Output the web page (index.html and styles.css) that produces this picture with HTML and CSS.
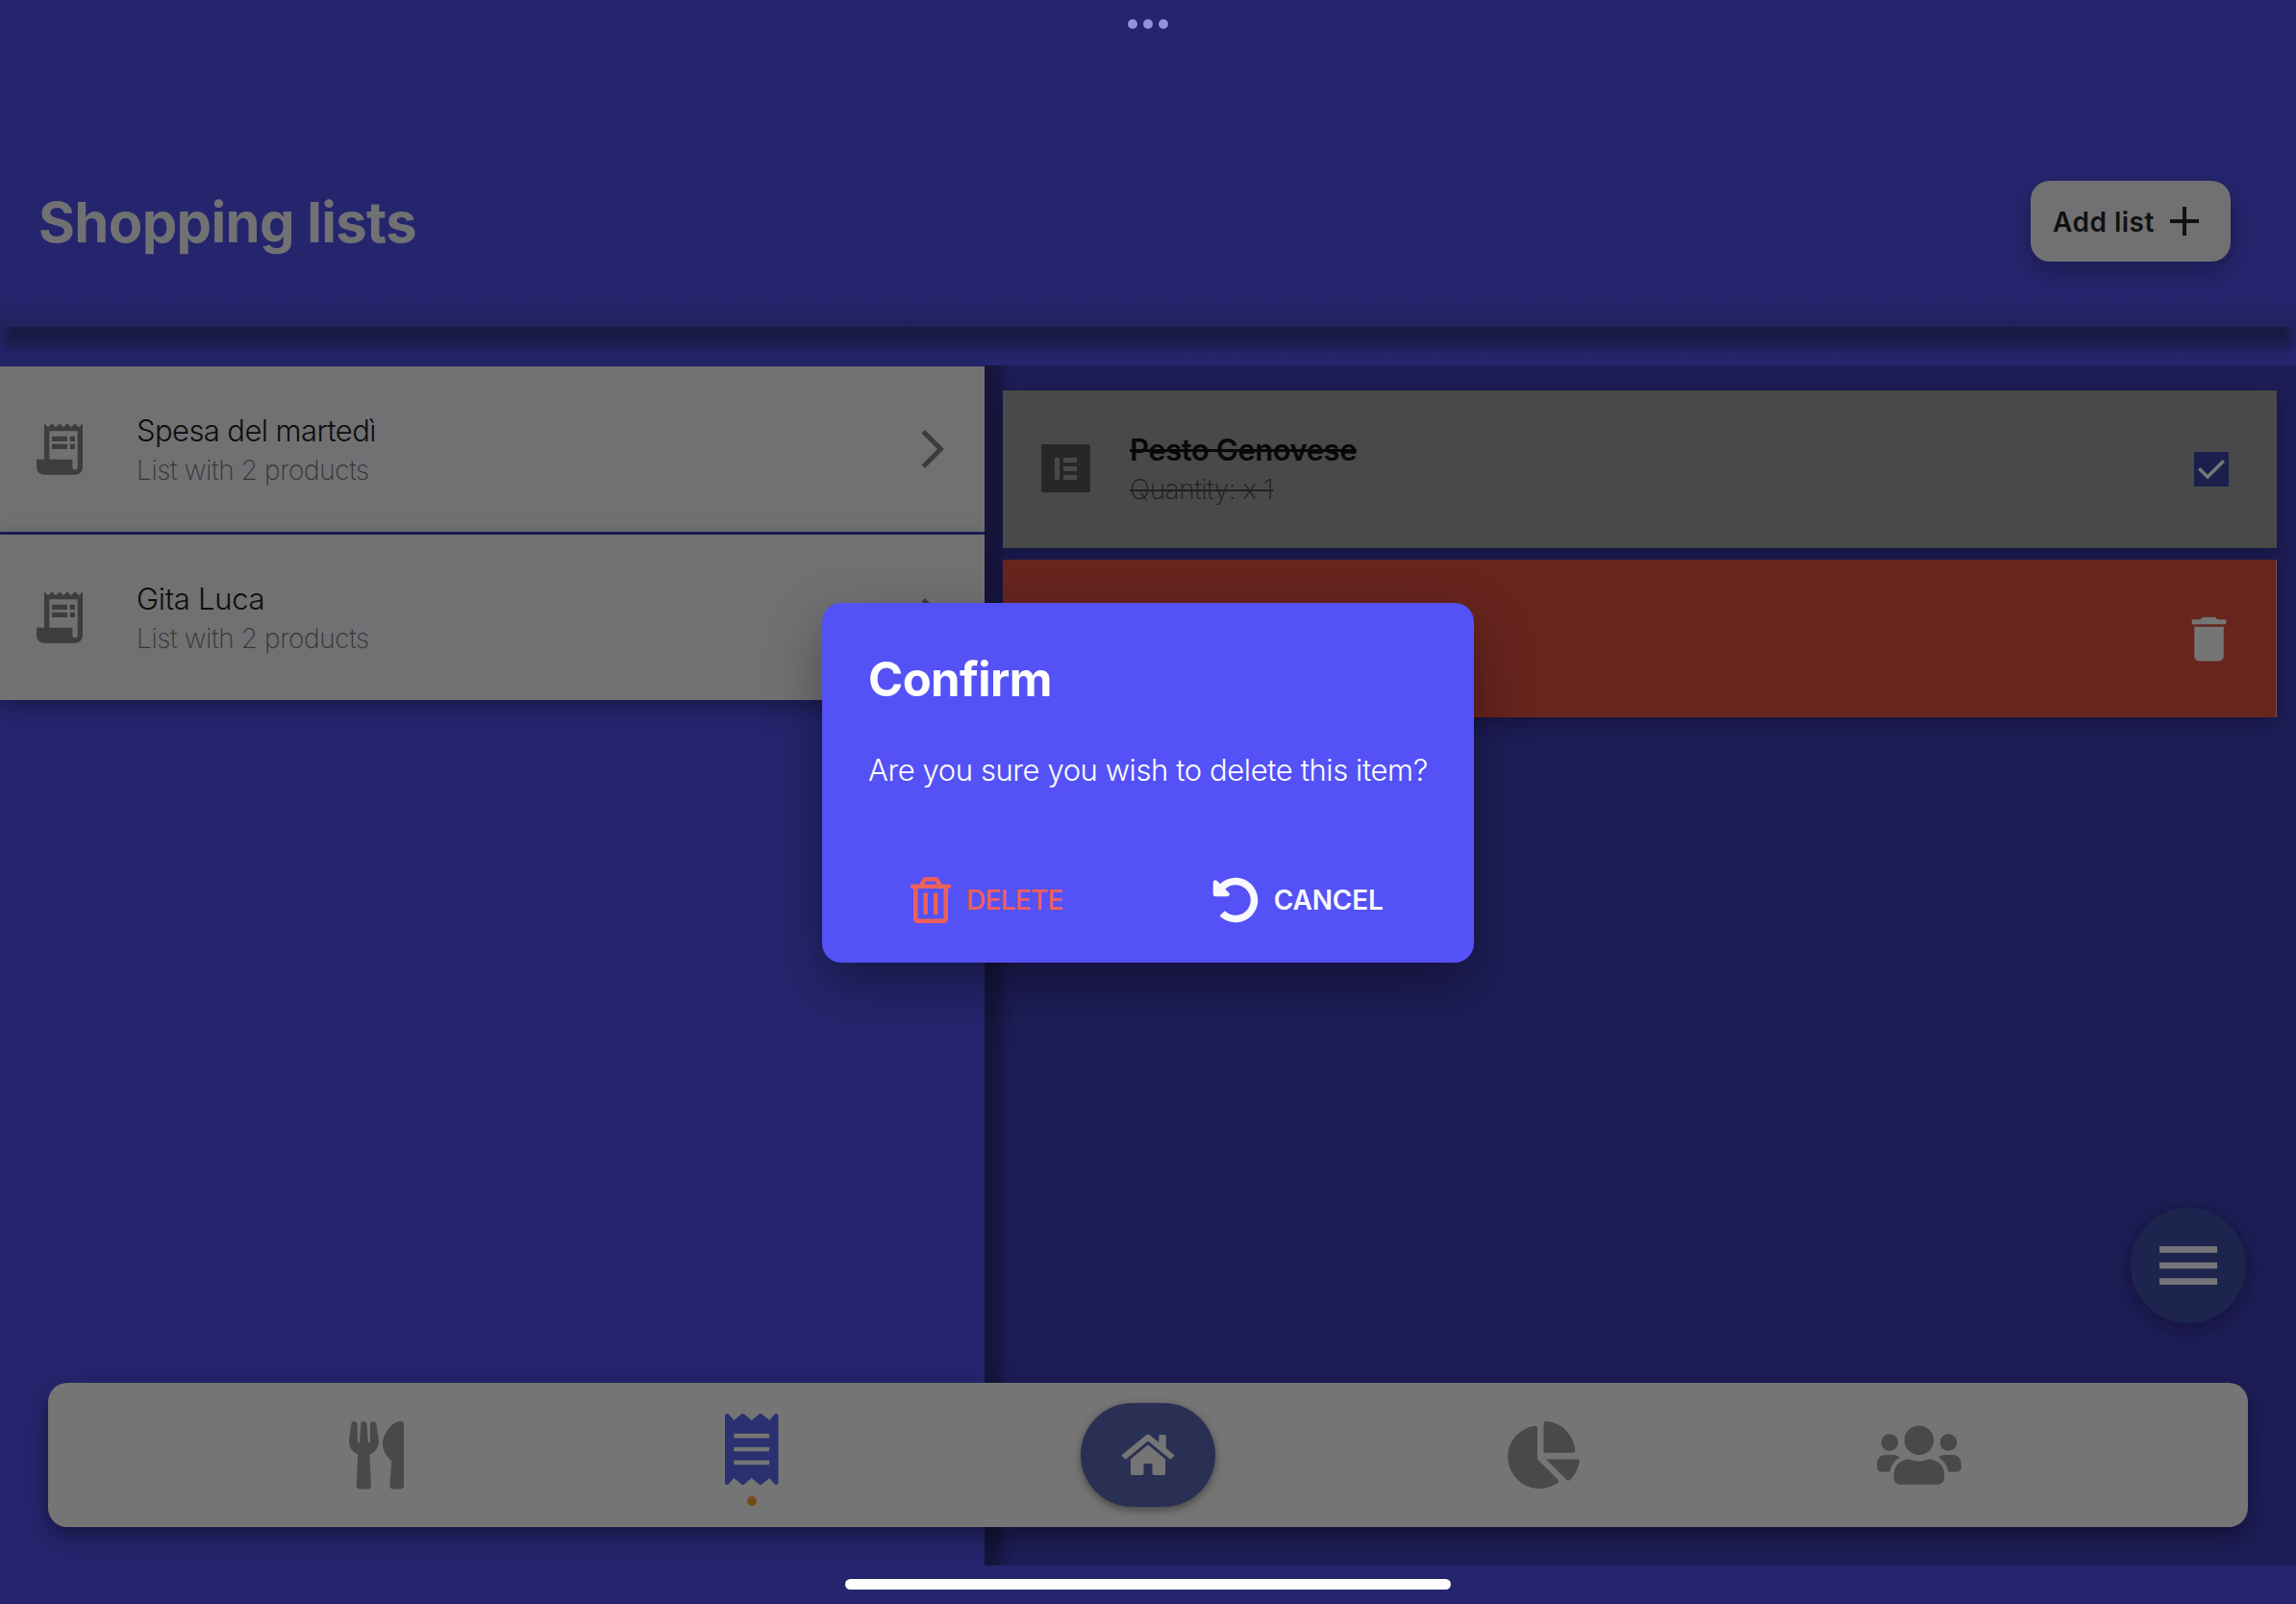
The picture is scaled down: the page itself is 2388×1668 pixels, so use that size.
FILE: index.html
```html
<!DOCTYPE html>
<html lang="en">
<head>
<meta charset="utf-8">
<title>Shopping lists</title>
<link rel="stylesheet" href="styles.css">
</head>
<body>
<svg class="sprite" aria-hidden="true">
  <symbol id="receipt-long" viewBox="0 0 24 24"><path fill-rule="evenodd" d="M19.5 3.5L18 2l-1.5 1.5L15 2l-1.5 1.5L12 2l-1.5 1.5L9 2 7.5 3.5 6 2v14H3v3c0 1.66 1.34 3 3 3h12c1.66 0 3-1.34 3-3V2l-1.5 1.5zM19 19c0 .55-.45 1-1 1s-1-.45-1-1v-3H8V5h11v14z"/><path d="M9 7h6v2H9zM16 7h2v2h-2zM9 10h6v2H9zM16 10h2v2h-2z"/></symbol>
  <symbol id="chevron" viewBox="0 0 24 24"><path d="M6.23 20.23 8 22l10-10L8 2 6.23 3.77 14.46 12z"/></symbol>
</svg>
<div class="app">
  <div class="grabber"><i></i><i></i><i></i></div>
  <header class="header">
    <h1 class="title">Shopping lists</h1>
    <button class="add"><span class="add-label">Add list</span><svg class="plus" viewBox="0 0 30 30"><path d="M13 0h4v13h13v4H17v13h-4V17H0v-4h13z"/></svg></button>
  </header>
  <div class="divider"></div>
  <main class="panels">
    <section class="lists">
      <article class="list-row">
        <svg class="receipt-icon"><use href="#receipt-long"/></svg>
        <div class="row-text"><div class="row-title">Spesa del martedì</div><div class="row-sub">List with 2 products</div></div>
        <svg class="chevron"><use href="#chevron"/></svg>
      </article>
      <article class="list-row">
        <svg class="receipt-icon"><use href="#receipt-long"/></svg>
        <div class="row-text"><div class="row-title short">Gita Luca</div><div class="row-sub">List with 2 products</div></div>
        <svg class="chevron"><use href="#chevron"/></svg>
      </article>
    </section>
    <section class="products">
      <article class="product">
        <svg class="product-icon" viewBox="0 0 51 50"><rect class="tile" width="51" height="50" rx="2"/><path class="marks" d="M14 14h5v23h-5zM23 14h14v5H23zM23 23h14v5H23zM23 32h14v5H23z"/></svg>
        <div class="product-text"><div class="product-title">Pesto Genovese</div><div class="product-sub">Quantity: x 1</div></div>
        <svg class="check" viewBox="0 0 36 36"><rect class="box" width="36" height="36" rx="1.5"/><path class="tick" d="M5.2 17.2 14 26 30.8 9.2"/></svg>
      </article>
      <article class="product removing">
        <svg class="bin" viewBox="0 0 24 24"><path d="M6 19c0 1.1.9 2 2 2h8c1.1 0 2-.9 2-2V7H6v12zM19 4h-3.5l-1-1h-5l-1 1H5v2h14V4z"/></svg>
      </article>
    </section>
  </main>
  <button class="fab"><svg viewBox="0 0 24 24"><path d="M3 18h18v-2H3v2zm0-5h18v-2H3v2zm0-7v2h18V6H3z"/></svg></button>
  <nav class="nav">
    <a class="tab"><svg class="utensils" viewBox="1089 236 171 211"><path d="M1096 244q1-8 9-8t10 8L1116 302h6L1126 244q1-8 9-8t10 8L1148 302h7L1155 244q1-8 9-8t10 8L1182 296Q1182 328 1153 340L1158 436q0 11-10 11h-26q-10 0-10-11L1117 340Q1089 328 1089 296z"/><path d="M1260 244v193q0 10-10 10h-24q-10 0-10-10L1222 360Q1194 336 1194 307C1194 280 1218 238 1250 236q10 0 10 8z"/></svg></a>
    <a class="tab active"><svg class="receipt" viewBox="0 0 384 512"><path d="M358.4 3.2L320 48 265.6 3.2a15.9 15.9 0 0 0-19.2 0L192 48 137.6 3.2a15.9 15.9 0 0 0-19.2 0L64 48 25.6 3.2C15-4.7 0 2.8 0 16v480c0 13.2 15 20.7 25.6 12.8L64 464l54.4 44.8a15.9 15.9 0 0 0 19.2 0L192 464l54.4 44.8a15.9 15.9 0 0 0 19.2 0L320 464l38.4 44.8c10.5 7.9 25.6.4 25.6-12.8V16c0-13.2-15-20.7-25.6-12.8zM320 360c0 4.4-3.6 8-8 8H72c-4.4 0-8-3.6-8-8v-16c0-4.4 3.6-8 8-8h240c4.4 0 8 3.6 8 8v16zm0-96c0 4.4-3.6 8-8 8H72c-4.4 0-8-3.6-8-8v-16c0-4.4 3.6-8 8-8h240c4.4 0 8 3.6 8 8v16zm0-96c0 4.4-3.6 8-8 8H72c-4.4 0-8-3.6-8-8v-16c0-4.4 3.6-8 8-8h240c4.4 0 8 3.6 8 8v16z"/></svg><i class="dot"></i></a>
    <a class="tab"><span class="home"><svg viewBox="0 0 576 512"><path d="M280.37 148.26L96 300.11V464a16 16 0 0 0 16 16l112.06-.29a16 16 0 0 0 15.92-16V368a16 16 0 0 1 16-16h64a16 16 0 0 1 16 16v95.64a16 16 0 0 0 16 16.05L464 480a16 16 0 0 0 16-16V300L295.67 148.26a12.19 12.19 0 0 0-15.3 0zM571.6 251.47L488 182.56V44.05a12 12 0 0 0-12-12h-56a12 12 0 0 0-12 12v72.61L318.47 43a48 48 0 0 0-61 0L4.34 251.47a12 12 0 0 0-1.6 16.9l25.5 31A12 12 0 0 0 45.15 301l235.22-193.74a12.19 12.19 0 0 1 15.3 0L530.9 301a12 12 0 0 0 16.9-1.6l25.5-31a12 12 0 0 0-1.7-16.93z"/></svg></span></a>
    <a class="tab"><svg class="pie" viewBox="0 0 544 512"><path d="M527.79 288H290.5l158.03 158.03c6.04 6.04 15.98 6.53 22.19.68 38.7-36.46 65.32-85.61 73.13-140.86 1.34-9.46-6.51-17.85-16.06-17.85zm-15.83-64.8C503.72 103.74 408.26 8.28 288.8.04 279.68-.59 272 7.1 272 16.24V240h223.77c9.14 0 16.82-7.68 16.19-16.8zM224 288V50.71c0-9.55-8.39-17.4-17.84-16.06C86.99 51.49-4.1 155.6.14 280.37 4.5 408.51 114.83 513.59 243.03 511.98c50.4-.63 96.97-16.87 135.26-44.03 7.9-5.6 8.42-17.23 1.57-24.08L224 288z"/></svg></a>
    <a class="tab"><svg class="people" viewBox="0 0 640 512"><path d="M96 224c35.3 0 64-28.7 64-64s-28.7-64-64-64-64 28.7-64 64 28.7 64 64 64zm448 0c35.3 0 64-28.7 64-64s-28.7-64-64-64-64 28.7-64 64 28.7 64 64 64zm32 32h-64c-17.6 0-33.5 7.1-45.1 18.6 40.3 22.1 68.9 62 75.1 109.4h66c17.7 0 32-14.3 32-32v-32c0-35.3-28.7-64-64-64zm-256 0c61.9 0 112-50.1 112-112S381.9 32 320 32 208 82.1 208 144s50.1 112 112 112zm76.8 32h-8.3c-20.8 10-43.9 16-68.5 16s-47.6-6-68.5-16h-8.3C179.6 288 128 339.6 128 403.2V432c0 26.5 21.5 48 48 48h288c26.5 0 48-21.5 48-48v-28.8c0-63.6-51.6-115.2-115.2-115.2zm-223.7-13.4C161.5 263.1 145.6 256 128 256H64c-35.3 0-64 28.7-64 64v32c0 17.7 14.3 32 32 32h65.9c6.3-47.4 34.9-87.3 75.2-109.4z"/></svg></a>
  </nav>
  <div class="home-indicator"></div>
  <div class="dialog" role="dialog">
    <h2 class="dialog-title">Confirm</h2>
    <p class="dialog-text">Are you sure you wish to delete this item?</p>
    <div class="actions">
      <button class="action delete"><svg class="trash" viewBox="0 0 448 512"><path d="M268 416h24a12 12 0 0 0 12-12V188a12 12 0 0 0-12-12h-24a12 12 0 0 0-12 12v216a12 12 0 0 0 12 12zM432 80h-82.41l-34-56.7A48 48 0 0 0 274.41 0H173.59a48 48 0 0 0-41.16 23.3L98.41 80H16A16 16 0 0 0 0 96v16a16 16 0 0 0 16 16h16v336a48 48 0 0 0 48 48h288a48 48 0 0 0 48-48V128h16a16 16 0 0 0 16-16V96a16 16 0 0 0-16-16zM171.84 50.91A6 6 0 0 1 177 48h94a6 6 0 0 1 5.15 2.91L293.61 80H154.39zM368 464H80V128h288zm-212-48h24a12 12 0 0 0 12-12V188a12 12 0 0 0-12-12h-24a12 12 0 0 0-12 12v216a12 12 0 0 0 12 12z"/></svg>DELETE</button>
      <button class="action cancel"><svg class="undo" viewBox="0 0 512 512"><path d="M255.545 8c-66.269.119-126.438 26.233-170.86 68.685L48.971 40.971C33.851 25.851 8 36.559 8 57.941V192c0 13.255 10.745 24 24 24h134.059c21.382 0 32.09-25.851 16.971-40.971l-41.75-41.75c30.864-28.899 70.801-44.907 113.23-45.273 92.398-.798 170.283 73.977 169.484 169.442C423.236 348.009 349.816 424 256 424c-41.127 0-79.997-14.678-110.63-41.556-4.743-4.161-11.906-3.908-16.368.553L89.34 422.659c-4.872 4.872-4.631 12.815.482 17.433C133.798 479.813 192.074 504 256 504c136.966 0 247.999-111.033 248-247.998C504.001 119.193 392.354 7.755 255.545 8z"/></svg>CANCEL</button>
    </div>
  </div>
</div>
</body>
</html>
```
FILE: styles.css
```css
* { box-sizing: border-box; margin: 0; }
body { width: 2388px; height: 1668px; overflow: hidden; background: #25256e; font-family: Inter, "Liberation Sans", sans-serif; }
button { border: 0; background: none; font: inherit; color: inherit; padding: 0; }
.sprite { position: absolute; width: 0; height: 0; }
.app { position: relative; width: 2388px; height: 1668px; display: flex; flex-direction: column; }

.grabber { display: flex; justify-content: center; gap: 6px; height: 120px; padding-top: 20px; }
.grabber i { width: 10px; height: 10px; border-radius: 50%; background: #9392de; }

.header { height: 220px; display: flex; justify-content: space-between; align-items: center; padding: 0 68px 0 40px; background: linear-gradient(to top, #21215d 0, #232365 14px, #25256e 32px); }
.title { font-size: 58px; font-weight: 700; letter-spacing: -0.65px; color: #717173; line-height: 70px; margin-top: 1px; white-space: nowrap; }
.add { width: 208px; height: 84px; border-radius: 20px; background: #717173; display: flex; align-items: center; gap: 16px; padding-left: 23px; box-shadow: 0 10px 24px rgba(0,0,0,.28); }
.add-label { font-size: 28px; font-weight: 600; letter-spacing: 0.5px; color: #111; white-space: nowrap; padding-top: 1px; }
.plus { width: 30px; height: 30px; fill: #111; }

.divider { height: 40px; background: linear-gradient(to right, rgba(37,37,110,.65) 0, rgba(37,37,110,0) 12px, rgba(37,37,110,0) calc(100% - 12px), rgba(37,37,110,.65) 100%), linear-gradient(#181a46 0, #181a46 10px, #1b1d50 18px, #222366 26px, #25256d 34px); }

.panels { height: 1248px; display: grid; grid-template-columns: 1024px 1364px; }
.lists { padding-top: 1px; display: flex; flex-direction: column; gap: 3px; }
.list-row { height: 172px; display: flex; align-items: center; padding: 0 30px; background: #717173; box-shadow: 0 7px 22px rgba(0,0,0,.35); clip-path: inset(-30px 0 -40px 0); }
.receipt-icon { width: 64px; height: 64px; fill: #3d3d3d; }
.row-text { flex: 1; padding: 3px 0 0 48px; }
.row-title { font-size: 31px; font-weight: 300; letter-spacing: -0.6px; color: #0d0d0d; line-height: 40px; white-space: nowrap; }
.row-title.short { letter-spacing: -0.3px; }
.row-sub { font-size: 28px; font-weight: 250; letter-spacing: -0.38px; color: #363637; line-height: 42px; white-space: nowrap; }
.chevron { width: 48px; height: 48px; fill: #3d3d3d; }

.products { background: linear-gradient(to right, #15153a 0, #16163f 12px, #1b1a50 22px, #1e1d58 34px) #1e1d58; padding: 26px 20px 0 19px; display: flex; flex-direction: column; gap: 12px; }
.product { height: 164px; display: flex; align-items: center; padding: 0 50px 0 40px; background: #494949; box-shadow: 0 6px 20px rgba(0,0,0,.3); }
.product-icon { width: 51px; height: 50px; margin-bottom: 2px; }
.tile { fill: #272727; }
.marks { fill: #494949; }
.product-text { flex: 1; padding: 2px 0 0 41px; }
.product-title { font-size: 31px; font-weight: 600; letter-spacing: -0.47px; color: #080808; line-height: 40px; text-decoration: line-through; white-space: nowrap; }
.product-sub { font-size: 28px; font-weight: 250; letter-spacing: -0.45px; color: #202020; line-height: 42px; text-decoration: line-through; white-space: nowrap; }
.check { width: 36px; height: 36px; }
.box { fill: #1b1f4d; }
.tick { fill: none; stroke: #777; stroke-width: 3.6; }
.removing { justify-content: flex-end; padding-right: 39px; background: #67251e; border-right: 1px solid #6d5150; }
.bin { width: 61px; height: 61px; fill: #757575; }

.fab { position: absolute; left: 2216px; top: 1256px; width: 120px; height: 120px; border-radius: 50%; background: #1d254f; display: flex; align-items: center; justify-content: center; box-shadow: 0 4px 26px rgba(0,0,0,.4); }
.fab svg { width: 80px; height: 80px; fill: #757577; }

.nav { position: absolute; left: 50px; top: 1438px; width: 2288px; height: 150px; border-radius: 20px; background: #757575; padding: 0 146px; display: grid; grid-template-columns: 391px 390px 434px 389px 392px; box-shadow: 0 10px 26px rgba(0,0,0,.4); }
.tab { position: relative; display: flex; align-items: center; justify-content: center; }
.tab svg { fill: #494949; }
.utensils { width: 57px; height: 70.5px; overflow: visible; }
.tab .receipt { width: 55.5px; height: 74px; fill: #2a3070; margin-top: -12px; }
.dot { position: absolute; left: calc(50% - 5px); top: 118px; width: 10px; height: 10px; border-radius: 50%; background: #744a17; }
.home { width: 140px; height: 108px; border-radius: 54px; background: #2a3054; display: flex; align-items: center; justify-content: center; box-shadow: 0 3px 8px rgba(0,0,0,.4); }
.tab .home svg { width: 54px; height: 48px; fill: #757575; }
.pie { width: 75px; height: 70px; }
.people { width: 88px; height: 70px; }

.home-indicator { position: absolute; left: 879px; top: 1642px; width: 630px; height: 11px; border-radius: 6px; background: #fff; }

.dialog { position: absolute; left: 855px; top: 627px; width: 678px; height: 374px; border-radius: 20px; background: #5452f6; padding: 50px 48px 0; color: #fff; box-shadow: 0 24px 56px rgba(0,0,0,.35); }
.dialog-title { font-size: 49px; font-weight: 700; letter-spacing: -0.6px; line-height: 60px; white-space: nowrap; }
.dialog-text { margin-top: 44px; font-size: 31px; font-weight: 300; letter-spacing: -0.41px; line-height: 40px; white-space: nowrap; }
.actions { margin-top: 91px; display: flex; padding-left: 44px; gap: 155px; }
.action { height: 48px; display: flex; align-items: center; gap: 16px; font-size: 28px; font-weight: 600; white-space: nowrap; }
.delete { color: #ee6059; letter-spacing: -0.7px; font-weight: 500; }
.cancel { color: #f8f8ff; letter-spacing: -0.2px; }
.trash { width: 42px; height: 48px; fill: currentColor; }
.undo { width: 48px; height: 48px; fill: currentColor; }
```
